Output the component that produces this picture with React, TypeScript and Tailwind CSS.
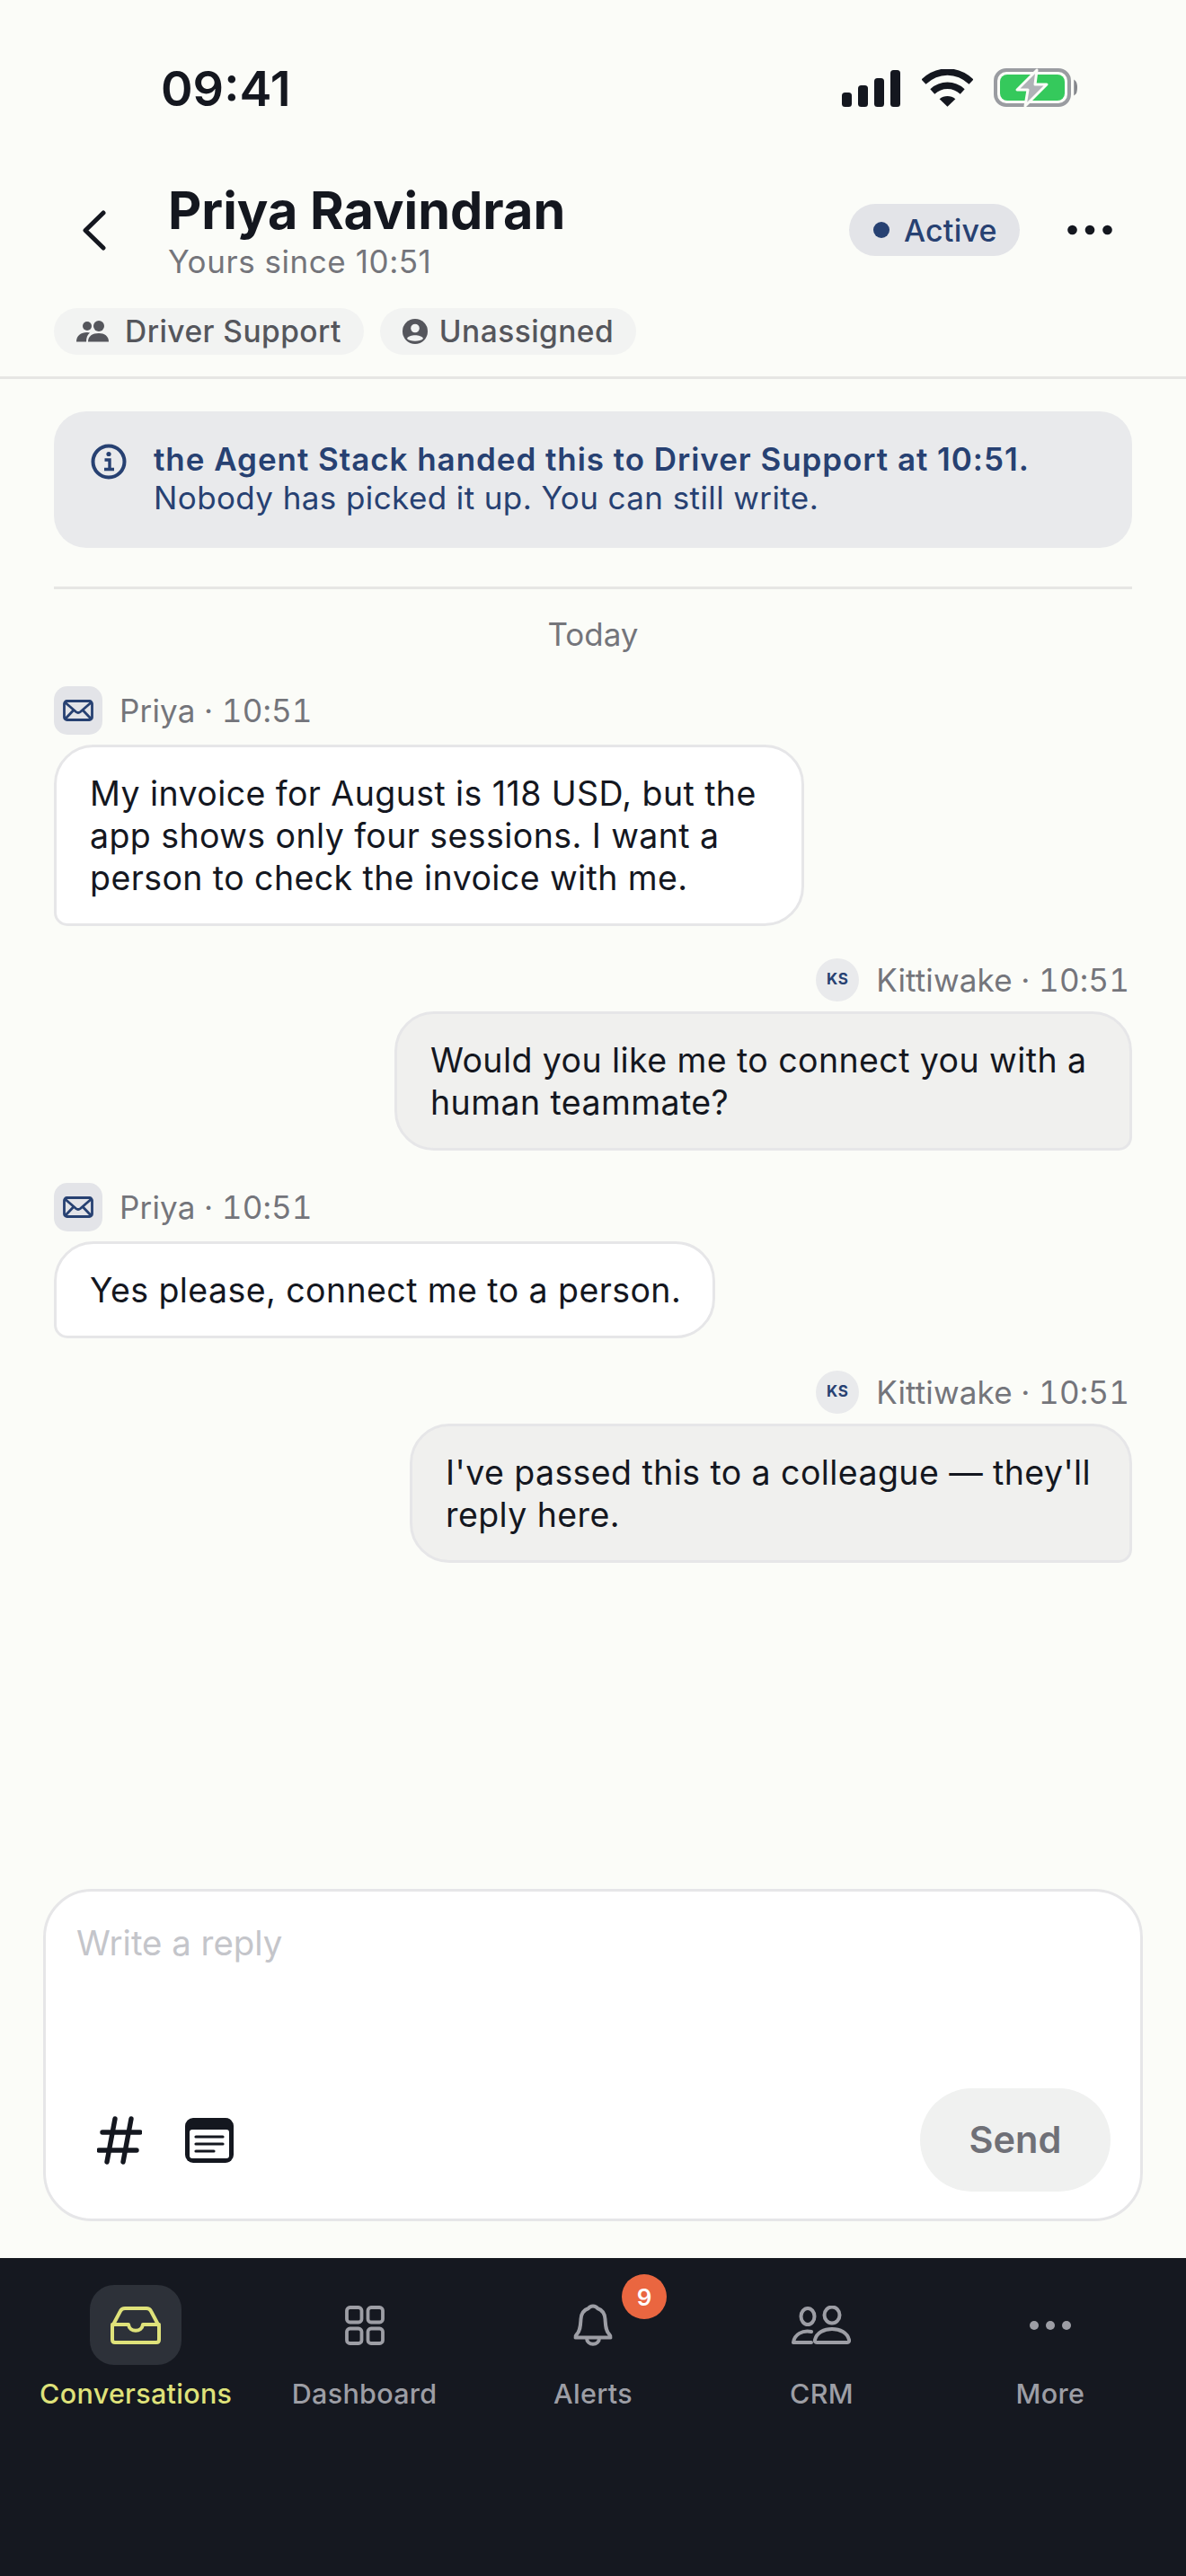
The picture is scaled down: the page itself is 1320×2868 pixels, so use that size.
import React from "react";

const font = { fontFamily: "Inter, 'Liberation Sans', sans-serif" };

function StatusIcons() {
  return (
    <div className="flex items-center">
      <svg width="66" height="42" viewBox="0 0 66 42" className="mr-[23px]" fill="#14171f">
        <rect x="0" y="26" width="11" height="16" rx="3.5" />
        <rect x="18" y="18" width="11" height="24" rx="3.5" />
        <rect x="36" y="10" width="11" height="32" rx="3.5" />
        <rect x="54" y="1" width="11" height="41" rx="3.5" />
      </svg>
      <svg width="57" height="42" viewBox="0 0 58 42" className="mr-[23px]" fill="none">
        <path d="M2 14 C18 -1 40 -1 56 14" stroke="#14171f" strokeWidth="7.5" />
        <path d="M12 25 C22 16 36 16 46 25" stroke="#14171f" strokeWidth="7.5" />
        <path d="M20 33.5 C25 29 33 29 38 33.5 L29 42 Z" fill="#14171f" />
      </svg>
      <svg width="94" height="44" viewBox="0 0 94 44" fill="none">
        <rect x="2" y="2" width="82" height="39" rx="12" stroke="#9a9ca1" strokeWidth="4" />
        <rect x="7" y="7" width="72" height="29" rx="8" fill="#35c95c" />
        <path d="M90 14 C93 16 93 27 90 29 Z" fill="#85878c" stroke="#85878c" strokeWidth="1.5" />
        <path d="M48 2 L26 24 H38 L35 42 L59 18 H46 Z" fill="#b0b2b7" stroke="#fbfcf8" strokeWidth="3" strokeLinejoin="round" />
      </svg>
    </div>
  );
}

function StatusBar() {
  return (
    <div className="flex h-[132px] items-end justify-between pl-[179px] pr-[120px]">
      <span className="mb-[2px] text-[54px] font-semibold leading-[62px] text-[#14171f]">09:41</span>
      <div className="mb-[12px]">
        <StatusIcons />
      </div>
    </div>
  );
}

function Chip({ icon, label }: { icon: React.ReactNode; label: string }) {
  return (
    <div className="flex h-[52px] items-center gap-[15px] rounded-full bg-[#f2f3f2] px-[25px] text-[33.5px] font-medium leading-[52px] tracking-[0.45px] text-[#55565c]">
      {icon}
      <span>{label}</span>
    </div>
  );
}

function Header() {
  return (
    <div className="border-b-[3px] border-[#e6e6e4] pb-[24px]">
      <div className="mt-[58px] flex h-[132px] items-center pr-[82px]">
        <button className="flex w-[187px] pl-[91px]">
          <svg width="27" height="45" viewBox="0 0 27 45" fill="none">
            <path d="M24 3 L4 22.5 L24 42" stroke="#14171f" strokeWidth="5" strokeLinecap="round" strokeLinejoin="round" />
          </svg>
        </button>
        <div className="mt-[3px] flex-1">
          <div className="text-[57.6px] font-bold leading-[68px] text-[#14171f]">Priya Ravindran</div>
          <div className="mt-[-1px] text-[35px] leading-[48px] tracking-[0.55px] text-[#74757b]">Yours since 10:51</div>
        </div>
        <div className="mr-[53px] flex h-[58px] w-[190px] items-center gap-[16px] rounded-full bg-[#e3e4e8] pl-[27px] text-[34px] font-medium tracking-[0.2px] text-[#274172]">
          <span className="h-[18px] w-[18px] rounded-full bg-[#274172]" />
          <span>Active</span>
        </div>
        <svg width="50" height="12" viewBox="0 0 50 12" fill="#14171f">
          <circle cx="5.5" cy="6" r="5.3" />
          <circle cx="25" cy="6" r="5.3" />
          <circle cx="44.5" cy="6" r="5.3" />
        </svg>
      </div>
      <div className="mt-[21px] flex gap-[18px] pl-[60px]">
        <Chip
          label="Driver Support"
          icon={
            <svg width="36" height="24" viewBox="0 0 36 24" fill="#55565c" className="mr-[3px]">
              <circle cx="12" cy="6" r="5" />
              <circle cx="25" cy="6" r="6" />
              <path d="M0 23.5 C0 17 5 13 12 13 C13 13 14 13.2 15 13.6 C12 16 11 19.5 11 23.5 Z" />
              <path d="M13 23.5 C13 17 18 14 25 14 C31 14 36 17 36 23.5 Z" />
            </svg>
          }
        />
        <Chip
          label="Unassigned"
          icon={
            <svg width="28" height="28" viewBox="0 0 28 28" className="mr-[-2px]">
              <circle cx="14" cy="14" r="14" fill="#55565c" />
              <circle cx="14" cy="10.5" r="4.8" fill="#f2f3f2" />
              <path d="M5 22 C7 17 21 17 23 22 C20 25.5 8 25.5 5 22 Z" fill="#f2f3f2" />
            </svg>
          }
        />
      </div>
    </div>
  );
}

function Banner() {
  return (
    <div className="mx-[60px] mt-[36px] flex h-[152px] gap-[30px] rounded-[36px] bg-[#e9eaec] pl-[41px] pt-[32px]">
      <svg width="40" height="40" viewBox="0 0 40 40" fill="none" className="mt-[4px] shrink-0">
        <circle cx="20" cy="20" r="17.5" stroke="#274172" strokeWidth="4" />
        <circle cx="20" cy="11.5" r="2.6" fill="#274172" />
        <path d="M15.5 18 H21 V28 M15 28.5 H26" stroke="#274172" strokeWidth="3.4" />
      </svg>
      <div className="whitespace-nowrap text-[35px] leading-[43px] tracking-[0.4px] text-[#274172]">
        <div className="font-semibold tracking-[0.95px]">the Agent Stack handed this to Driver Support at 10:51.</div>
        <div>Nobody has picked it up. You can still write.</div>
      </div>
    </div>
  );
}

function MailAvatar() {
  return (
    <div className="flex h-[54px] w-[54px] items-center justify-center rounded-[15px] bg-[#e3e4e8]">
      <svg width="34" height="24" viewBox="0 0 34 24" fill="none" stroke="#274172" strokeWidth="2.8" strokeLinejoin="round" strokeLinecap="round">
        <rect x="1.5" y="1.5" width="31" height="21" rx="3" />
        <path d="M3 3.5 L14.5 13.5 Q17 15.5 19.5 13.5 L31 3.5 M3 21 L12 11.5 M31 21 L22 11.5" />
      </svg>
    </div>
  );
}

function KsAvatar() {
  return (
    <div className="flex h-[48px] w-[48px] items-center justify-center rounded-full bg-[#e9eaec] text-[17px] font-bold tracking-[0.5px] text-[#274172]">
      KS
    </div>
  );
}

function Incoming({ text, wide }: { text: React.ReactNode; wide: string }) {
  return (
    <div className="mt-[36px]">
      <div className="flex h-[54px] items-center gap-[19px]">
        <MailAvatar />
        <span className="text-[35px] leading-[48px] tracking-[0.15px] tabular-nums text-[#74757b]">Priya · 10:51</span>
      </div>
      <div className={`mt-[11px] whitespace-nowrap rounded-t-[44px] rounded-br-[44px] rounded-bl-[15px] border-[3px] border-[#e6e6e8] bg-white py-[27.5px] pl-[37px] pr-[38px] text-[37.5px] leading-[47px] tracking-[0.42px] text-[#14171f] ${wide}`}>
        {text}
      </div>
    </div>
  );
}

function Outgoing({ text, wide }: { text: React.ReactNode; wide: string }) {
  return (
    <div className="mt-[36px] flex flex-col items-end">
      <div className="flex h-[48px] items-center gap-[19px] pr-[3px]">
        <KsAvatar />
        <span className="text-[35px] leading-[48px] tracking-[0.15px] tabular-nums text-[#74757b]">Kittiwake · 10:51</span>
      </div>
      <div className={`mt-[11px] whitespace-nowrap rounded-t-[44px] rounded-bl-[44px] rounded-br-[15px] border-[3px] border-[#e6e6e8] bg-[#f0f0ee] px-[37px] py-[27.5px] text-[37.5px] leading-[47px] tracking-[0.42px] text-[#14171f] ${wide}`}>
        {text}
      </div>
    </div>
  );
}

function Thread() {
  return (
    <div className="mx-[60px] mt-[43px] flex-1 border-t-[3px] border-[#e6e6e4]">
      <div className="mb-[-2px] mt-[26px] text-center text-[35px] leading-[48px] text-[#74757b]">Today</div>
      <Incoming
        wide="w-[835px]"
        text={
          <>
            My invoice for August is 118 USD, but the
            <br />
            app shows only four sessions. I want a
            <br />
            person to check the invoice with me.
          </>
        }
      />
      <Outgoing
        wide="w-[821px]"
        text={
          <>
            Would you like me to connect you with a
            <br />
            human teammate?
          </>
        }
      />
      <Incoming wide="w-[736px]" text="Yes please, connect me to a person." />
      <Outgoing
        wide="w-[804px]"
        text={
          <>
            I've passed this to a colleague — they'll
            <br />
            reply here.
          </>
        }
      />
    </div>
  );
}

function Composer() {
  return (
    <div className="mx-[48px] mb-[41px] flex h-[370px] flex-col rounded-[54px] border-[3px] border-[#e6e6e8] bg-white pl-[34px] pr-[33px]">
      <div className="mt-[30px] text-[38.4px] leading-[54px] text-[#c4c5ca]">Write a reply</div>
      <div className="mb-[30px] mt-auto flex items-center justify-between">
        <div className="flex items-center gap-[48px] pl-[23px]">
          <svg width="50" height="54" viewBox="0 0 50 54" fill="none" stroke="#14171f" strokeWidth="5.4" strokeLinecap="round">
            <path d="M20 3 L11 51 M38 3 L29 51 M6 18 H48 M2 38 H44" />
          </svg>
          <svg width="54" height="50" viewBox="0 0 54 50">
            <rect width="54" height="50" rx="9" fill="#14171f" />
            <rect x="5" y="13" width="44" height="32" rx="3" fill="white" />
            <path d="M12 21 H42 M12 29 H42 M12 37 H32" stroke="#14171f" strokeWidth="3.2" strokeLinecap="round" />
          </svg>
        </div>
        <button className="flex h-[115px] w-[212px] items-center justify-center rounded-full bg-[#f0f1f0] text-[41.5px] font-semibold text-[#6f7077]">
          Send
        </button>
      </div>
    </div>
  );
}

function NavItem({ label, active, children, badge }: { label: string; active?: boolean; children: React.ReactNode; badge?: string }) {
  return (
    <div className="flex flex-1 flex-col items-center">
      <div className={`relative flex h-[89px] w-[102px] items-center justify-center rounded-[27px] ${active ? "bg-[#2d3139]" : ""}`}>
        {children}
        {badge && (
          <span className="absolute left-[83px] top-[-12px] flex h-[50px] w-[50px] items-center justify-center rounded-full bg-[#ea6640] text-[26px] font-semibold text-white">
            {badge}
          </span>
        )}
      </div>
      <div className={`mt-[10px] text-[30.5px] font-medium leading-[44px] tracking-[0.3px] ${active ? "text-[#dfe27a]" : "text-[#9d9ea5]"}`}>{label}</div>
    </div>
  );
}

function BottomNav() {
  const g = "#9d9ea5";
  return (
    <div className="flex h-[354px] bg-[#151820] px-[24px] pt-[30px]">
      <NavItem label="Conversations" active>
        <svg width="56" height="42" viewBox="0 0 56 42" fill="none" stroke="#dfe27a" strokeWidth="4" strokeLinejoin="round" strokeLinecap="round">
          <path d="M2 22 L11 5 Q12.5 2 16 2 H40 Q43.5 2 45 5 L54 22 V37 Q54 40 51 40 H5 Q2 40 2 37 Z" />
          <path d="M2 20 H20 C21 29 35 29 36 20 H54" />
        </svg>
      </NavItem>
      <NavItem label="Dashboard">
        <svg width="44" height="44" viewBox="0 0 44 44" fill="none" stroke={g} strokeWidth="3.8">
          <rect x="2" y="2" width="16.5" height="16.5" rx="3.5" />
          <rect x="25.5" y="2" width="16.5" height="16.5" rx="3.5" />
          <rect x="2" y="25.5" width="16.5" height="16.5" rx="3.5" />
          <rect x="25.5" y="25.5" width="16.5" height="16.5" rx="3.5" />
        </svg>
      </NavItem>
      <NavItem label="Alerts" badge="9">
        <svg width="46" height="48" viewBox="0 0 46 48" fill="none" stroke={g} strokeWidth="4" strokeLinejoin="round" strokeLinecap="round">
          <path d="M3.5 37.5 Q3 36 4.5 34.5 C9 30 9 24 9.5 17 C10 9 15 6 18 5 C20 1.5 26 1.5 28 5 C31 6 36 9 36.5 17 C37 24 37 30 41.5 34.5 Q43 36 42.5 37.5 Z" />
          <path d="M16 38 C16 47 30 47 30 38" />
        </svg>
      </NavItem>
      <NavItem label="CRM">
        <svg width="66" height="44" viewBox="0 0 66 44" fill="none" stroke={g} strokeWidth="4" strokeLinecap="round" strokeLinejoin="round">
          <ellipse cx="18" cy="12" rx="7.5" ry="9" />
          <ellipse cx="45" cy="10.5" rx="8.5" ry="9" />
          <path d="M22 29 C12 27 3 32 2 41 H22" />
          <path d="M28 41 Q25.5 41 26 38 C28 30 36 26 45 26 C54 26 62 30 64 38 Q64.5 41 62 41 Z" />
        </svg>
      </NavItem>
      <NavItem label="More">
        <svg width="46" height="12" viewBox="0 0 46 12" fill={g}>
          <circle cx="5" cy="6" r="5" />
          <circle cx="23" cy="6" r="5" />
          <circle cx="41" cy="6" r="5" />
        </svg>
      </NavItem>
    </div>
  );
}

export default function App() {
  return (
    <div className="flex h-[2868px] w-[1320px] flex-col overflow-hidden bg-[#fbfcf8]" style={font}>
      <StatusBar />
      <Header />
      <Banner />
      <Thread />
      <Composer />
      <BottomNav />
    </div>
  );
}
